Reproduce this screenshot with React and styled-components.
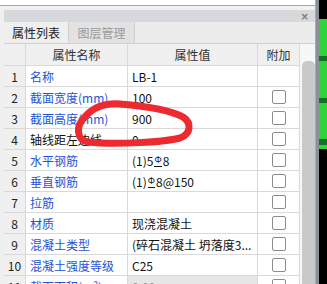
import React from "react";
import styled, { createGlobalStyle } from "styled-components";

const GlobalStyle = createGlobalStyle`
  html, body { margin: 0; padding: 0; }
  body {
    width: 327px;
    height: 284px;
    overflow: hidden;
    background: #f0f0f0;
    font-family: "Noto Sans CJK SC", "Noto Sans", sans-serif;
  }
`;

const Page = styled.div`
  display: flex;
  width: 327px;
  height: 284px;
  overflow: hidden;
`;

const Panel = styled.div`
  position: relative;
  width: 316px;
  display: flex;
  flex-direction: column;
  border-right: 1px solid #a9adb3;
  box-sizing: border-box;
`;

const TopBox = styled.div`
  height: 5px;
  background: #ffffff;
  border-bottom: 1px solid #a8a8a8;
`;

const TitleBar = styled.div`
  margin-top: 4px;
  margin-left: 4px;
  height: 12px;
  background: #d6d8dc;
  display: flex;
  justify-content: flex-end;
  align-items: center;
  padding-right: 6px;
  color: #7a7a7a;
  font-size: 10px;
  font-weight: bold;
  font-family: "DejaVu Sans", sans-serif;
`;

const TabRow = styled.div`
  margin-left: 4px;
  height: 21px;
  display: flex;
  background: #ececec;
  border-bottom: 1px solid #d0d0d0;
`;

const Tab = styled.div`
  width: ${p => (p.$active ? "64px" : "65px")};
  display: flex;
  align-items: center;
  justify-content: center;
  font-size: 12px;
  color: ${p => (p.$active ? "#222" : "#9a9a9a")};
  background: ${p => (p.$active ? "#efefef" : "#e2e2e2")};
  border-right: 1px solid #cfcfcf;
`;

const Body = styled.div`
  display: flex;
  margin-left: 4px;
  flex: 1;
  min-height: 0;
`;

const Table = styled.div`
  display: grid;
  grid-template-columns: 22px 102px 130px 42px;
  grid-auto-rows: 21px;
  grid-template-rows: 22px;
  align-content: start;
`;

const Cell = styled.div`
  box-sizing: border-box;
  border-right: 1px solid #d9d9d9;
  border-bottom: 1px solid #d9d9d9;
  display: flex;
  align-items: center;
  font-size: 12px;
  padding: 0 4px;
  white-space: nowrap;
  overflow: hidden;
  background: ${p => p.$bg || "#ffffff"};
  color: ${p => p.$color || "#111"};
  justify-content: ${p => p.$center ? "center" : "flex-start"};
`;

const Rebar = styled.span`
  position: relative;
  font-size: 9px;
  top: -3px;
  margin: 0 1px;
  border-bottom: 1px solid #111;
  line-height: 8px;
`;

const Check = styled.span`
  width: 14px;
  height: 14px;
  box-sizing: border-box;
  border: 1px solid #8c8c8c;
  border-radius: 2px;
  background: #fff;
`;

const Scroll = styled.div`
  width: 15px;
  background: #f7f7f7;
  padding-top: 17px;
  display: flex;
  justify-content: center;
`;

const Thumb = styled.div`
  width: 10px;
  flex: 1;
  background: #c9c9c9;
  border-radius: 5px 5px 0 0;
  margin-left: 2px;
`;

const Side = styled.div`
  flex: 1;
  display: flex;
  background: #000;
`;

const SideGrey = styled.div`
  width: 3px;
  background: #8b8f96;
`;

const Green = styled.div`
  margin-top: 19px;
  height: 130px;
  flex: 1;
  background: linear-gradient(
    #2fd43c 0 37px, #15702a 37px 42px, #2fd43c 42px 79px,
    #15702a 79px 84px, #2fd43c 84px 120px, #15702a 120px 126px, #2fd43c 126px
  );
`;

const Mark = styled.svg`
  position: absolute;
  left: 0;
  top: 0;
  pointer-events: none;
`;

const BLUE = "#2653d4";

const rows = [
  { name: "名称", value: "LB-1" },
  { name: "截面宽度(mm)", value: "100", check: true },
  { name: "截面高度(mm)", value: "900", check: true },
  { name: "轴线距左边线", value: "0", black: true, check: true },
  { name: "水平钢筋", value: ["(1)5", "8"], check: true },
  { name: "垂直钢筋", value: ["(1)", "8@150"], check: true },
  { name: "拉筋", value: "", check: true },
  { name: "材质", value: "现浇混凝土", check: true },
  { name: "混凝土类型", value: "(碎石混凝土 坍落度3...", check: true },
  { name: "混凝土强度等级", value: "C25", check: true },
  { name: "截面面积(m²)", value: "0.09", check: true, disabled: true },
];

export default function App() {
  return (
    <Page>
      <GlobalStyle />
      <Panel>
        <TopBox />
        <TitleBar>×</TitleBar>
        <TabRow>
          <Tab $active>属性列表</Tab>
          <Tab>图层管理</Tab>
        </TabRow>
        <Body>
          <Table>
            <Cell $bg="#f0f0f0" />
            <Cell $bg="#f0f0f0" $center $color="#333">属性名称</Cell>
            <Cell $bg="#f0f0f0" $center $color="#333">属性值</Cell>
            <Cell $bg="#f0f0f0" $center $color="#333">附加</Cell>
            {rows.map((r, i) => (
              <React.Fragment key={i}>
                <Cell $bg="#f0f0f0" $center $color="#222">{i + 1}</Cell>
                <Cell $color={r.black ? "#111" : BLUE}>{r.name}</Cell>
                <Cell $bg={r.disabled ? "#e6e6e6" : "#fff"} $color={r.disabled ? "#9a9a9a" : "#111"}>
                  {Array.isArray(r.value) ? (
                    <span>{r.value[0]}<Rebar>Φ</Rebar>{r.value[1]}</span>
                  ) : (
                    r.value
                  )}
                </Cell>
                <Cell $center>{r.check && <Check />}</Cell>
              </React.Fragment>
            ))}
          </Table>
          <Scroll>
            <Thumb />
          </Scroll>
        </Body>
        <Mark width="316" height="284" viewBox="0 0 316 284">
          <path
            d="M 84 118 C 92 108, 105 103, 120 104 C 145 106, 170 110, 183 117 C 192 123, 191 134, 180 138 C 165 142, 115 145, 88 142 C 76 140, 76 126, 84 118"
            fill="none"
            stroke="#ec2a2f"
            strokeWidth="7"
            strokeLinecap="round"
          />
        </Mark>
      </Panel>
      <Side>
        <SideGrey />
        <Green />
      </Side>
    </Page>
  );
}
